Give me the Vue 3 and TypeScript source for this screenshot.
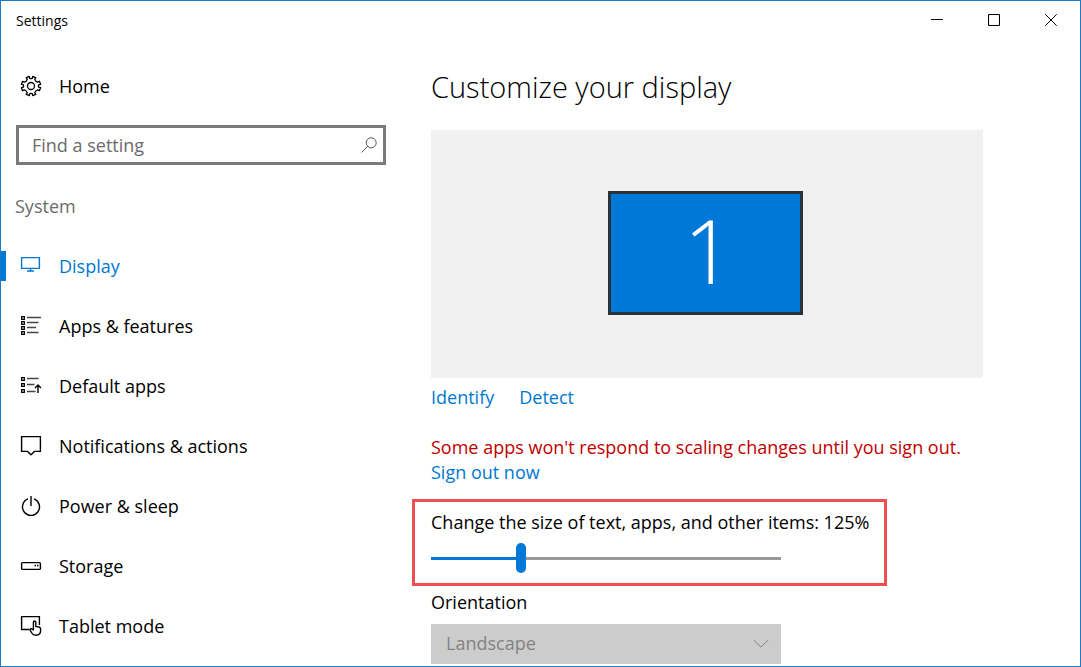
<script setup lang="ts">
import { computed, ref } from 'vue'

interface NavItem {
  id: string
  label: string
}

const items: NavItem[] = [
  { id: 'display', label: 'Display' },
  { id: 'apps', label: 'Apps & features' },
  { id: 'defaults', label: 'Default apps' },
  { id: 'notifications', label: 'Notifications & actions' },
  { id: 'power', label: 'Power & sleep' },
  { id: 'storage', label: 'Storage' },
  { id: 'tablet', label: 'Tablet mode' },
]

const active = ref('display')
const query = ref('')
const scale = ref(125)
const orientation = ref('Landscape')
const filled = computed(() => `${scale.value - 100}%`)
</script>

<template>
  <div class="window">
    <header class="titlebar">
      <span class="title">Settings</span>
      <div class="controls">
        <button type="button" aria-label="Minimize">
          <svg width="12" height="12" viewBox="0 0 12 12"><path d="M0 5.5H12" /></svg>
        </button>
        <button type="button" aria-label="Maximize">
          <svg width="12" height="12" viewBox="0 0 12 12"><path d="M.5 .5H11.5V11.5H.5Z" /></svg>
        </button>
        <button type="button" aria-label="Close">
          <svg width="12" height="12" viewBox="0 0 12 12"><path d="M.3 .3L11.7 11.7M11.7 .3L.3 11.7" /></svg>
        </button>
      </div>
    </header>

    <div class="body">
      <aside class="sidebar">
        <a class="row" href="#home">
          <svg class="icon gear" width="22" height="22" viewBox="0 0 22 22">
            <path d="M9.3 1.4L9.8 3.3Q11 3.9 12.2 3.3L12.7 1.4L15.7 2.6L14.8 4.4Q15.4 6.6 17.6 7.2L19.4 6.3L20.6 9.3L18.7 9.8Q18.1 11 18.7 12.2L20.6 12.7L19.4 15.7L17.6 14.8Q15.4 15.4 14.8 17.6L15.7 19.4L12.7 20.6L12.2 18.7Q11 18.1 9.8 18.7L9.3 20.6L6.3 19.4L7.2 17.6Q6.6 15.4 4.4 14.8L2.6 15.7L1.4 12.7L3.3 12.2Q3.9 11 3.3 9.8L1.4 9.3L2.6 6.3L4.4 7.2Q6.6 6.6 7.2 4.4L6.3 2.6Z" />
            <circle cx="11" cy="11" r="3.5" />
          </svg>
          <span>Home</span>
        </a>

        <form class="search" role="search" @submit.prevent>
          <input v-model="query" type="text" placeholder="Find a setting" aria-label="Find a setting" />
          <button type="submit" aria-label="Search">
            <svg width="16" height="16" viewBox="0 0 16 16">
              <circle cx="10.2" cy="5.8" r="5" />
              <path d="M6.6 9.4L.5 15.5" />
            </svg>
          </button>
        </form>

        <h2 class="group">System</h2>

        <nav>
          <a
            v-for="item in items"
            :key="item.id"
            class="row"
            :class="{ active: active === item.id }"
            :href="`#${item.id}`"
            @click="active = item.id"
          >
            <svg class="icon" width="22" height="22" viewBox="0 0 22 22">
              <g v-if="item.id === 'display'">
                <path d="M1.6 2.6H19.4V13.4H1.6ZM10.5 13.5V16M7 16H14" />
              </g>
              <g v-else-if="item.id === 'apps'">
                <path class="dots" d="M1.7 1.7H4.3V4.3H1.7ZM1.7 6.7H4.3V9.3H1.7ZM1.7 11.7H4.3V14.3H1.7ZM1.7 16.7H4.3V19.3H1.7Z" />
                <path class="lines" d="M7 2.5H21M7 7.5H18.5M7 12.5H16M7 17.5H18.5" />
              </g>
              <g v-else-if="item.id === 'defaults'">
                <path class="dots" d="M1.7 2.7H4.3V5.3H1.7ZM1.7 8.7H4.3V11.3H1.7ZM1.7 14.7H4.3V17.3H1.7Z" />
                <path class="lines" d="M7 3.5H18.5M7 9.5H14.5M7 16.5H15.5" />
                <path d="M18 18V10M15 13L18 10L21 13" />
              </g>
              <g v-else-if="item.id === 'notifications'">
                <path d="M1.6 1.6H20.4V16.4H14.5L11 19.8L7.5 16.4H1.6Z" />
              </g>
              <g v-else-if="item.id === 'power'">
                <path d="M8 3.9A8.5 8.5 0 1 0 14 3.9M11 1V11" />
              </g>
              <g v-else-if="item.id === 'storage'">
                <rect x="1.6" y="7.6" width="18.8" height="6.8" rx="1" />
                <path d="M14.5 10.5H16M17 10.5H18.5" />
              </g>
              <g v-else>
                <path d="M9.5 14.5H1.6V1.6H19.4V10" />
                <path d="M13.4 15.5V7.4Q13.4 6 14.6 6T15.8 7.4V11.4L19 12Q20.6 12.4 20.6 14V15.6Q20.6 20.2 16 20.2Q13 20.2 11.8 18L10.2 15.4Q9.8 13.6 11.4 13.6L13.4 15" />
              </g>
            </svg>
            <span>{{ item.label }}</span>
          </a>
        </nav>
      </aside>

      <main class="content">
        <h1>Customize your display</h1>
        <div class="preview">
          <button type="button" class="monitor">1</button>
        </div>
        <div class="links">
          <a href="#identify">Identify</a>
          <a href="#detect">Detect</a>
        </div>
        <p class="warning">Some apps won't respond to scaling changes until you sign out.</p>
        <a class="signout" href="#signout">Sign out now</a>

        <section class="scaling">
          <label for="scale">Change the size of text, apps, and other items: {{ scale }}%</label>
          <input
            id="scale"
            v-model.number="scale"
            type="range"
            min="100"
            max="200"
            step="25"
            :style="{ '--filled': filled }"
          />
        </section>

        <label class="orientation" for="orientation">Orientation</label>
        <div class="select">
          <select id="orientation" v-model="orientation" disabled>
            <option>Landscape</option>
            <option>Portrait</option>
          </select>
          <svg width="16" height="10" viewBox="0 0 16 10"><path d="M.8 1L8 8.2L15.2 1" /></svg>
        </div>
      </main>
    </div>
  </div>
</template>

<style>
body {
  margin: 0;
}
</style>

<style scoped>
.window {
  box-sizing: border-box;
  height: 100vh;
  display: flex;
  flex-direction: column;
  overflow: hidden;
  border: 1px solid #1e7ac4;
  background: #fff;
  color: #000;
  font-family: "Open Sans", "Noto Sans", sans-serif;
  font-size: 18px;
  line-height: 25px;
}

svg {
  display: block;
  fill: none;
  stroke: currentColor;
}

a {
  color: #0078d0;
  text-decoration: none;
}

button,
input,
select {
  margin: 0;
  padding: 0;
  border: 0;
  background: none;
  border-radius: 0;
  font: inherit;
  color: inherit;
  outline: none;
}

.titlebar {
  flex: none;
  display: flex;
  justify-content: space-between;
  height: 38px;
  padding: 0 1px 0 15px;
}

.title {
  font-size: 14px;
  line-height: 40px;
}

.controls {
  display: flex;
}

.controls button {
  display: grid;
  place-items: center;
  width: 57px;
}

.body {
  flex: 1;
  min-height: 0;
  display: grid;
  grid-template-columns: 386px 1fr;
}

.sidebar {
  padding-top: 17px;
}

.row {
  display: flex;
  align-items: center;
  gap: 17px;
  height: 60px;
  padding-left: 19px;
  color: #000;
}

.icon {
  flex: none;
  stroke-width: 1.4;
}

.gear {
  stroke-width: 1.3;
  stroke-linejoin: round;
}

.dots {
  stroke-width: 1.3;
}

.lines {
  stroke: #444;
}

.row.active {
  color: #0078d0;
  background: linear-gradient(#0078d7, #0078d7) left center / 5px 30px no-repeat;
}

.search {
  box-sizing: border-box;
  display: flex;
  align-items: center;
  height: 40px;
  margin: 9px 1px 0 15px;
  border: 3px solid #7a7a7a;
}

.search input {
  flex: 1;
  min-width: 0;
  padding-left: 13px;
}

.search input::placeholder {
  color: #6b6b6b;
  opacity: 1;
}

.search button {
  padding-right: 6px;
  color: #555;
}

.group {
  margin: 29px 0 17px 14px;
  font-size: 18px;
  font-weight: 400;
  color: #6b6b6b;
}

.content {
  padding: 28px 97px 0 44px;
}

h1 {
  margin: 0;
  font-size: 29px;
  line-height: 40px;
  font-weight: 300;
}

.preview {
  box-sizing: border-box;
  display: grid;
  place-items: center;
  height: 248px;
  max-width: 552px;
  margin-top: 23px;
  padding: 0 3px 2px 0;
  background: #f1f1f1;
}

.monitor {
  box-sizing: border-box;
  width: 195px;
  height: 124px;
  padding: 0 0 6px 6px;
  border: 3px solid #2b3238;
  background: #0078d7;
  color: #fff;
  font-size: 88px;
  line-height: 112px;
  font-weight: 300;
}

.links {
  display: flex;
  gap: 25px;
  margin-top: 7px;
}

.warning {
  margin: 25px 0 0;
  color: #c00000;
}

.signout {
  display: block;
  width: fit-content;
}

.scaling {
  box-sizing: border-box;
  max-width: 475px;
  margin: 14px 0 0 -19px;
  padding: 8px 16px 10px;
  border: 3px solid #ee4f4f;
}

.scaling label {
  display: block;
  white-space: nowrap;
}

#scale {
  appearance: none;
  display: block;
  width: 350px;
  height: 30px;
  margin-top: 8px;
  background:
    linear-gradient(#0078d7, #0078d7) left center / var(--filled) 3px no-repeat,
    linear-gradient(#999, #999) left center / 100% 3px no-repeat;
}

#scale::-webkit-slider-thumb {
  appearance: none;
  width: 10px;
  height: 30px;
  border-radius: 5px;
  background: #0078d7;
}

.orientation {
  display: block;
  margin-top: 4px;
}

.select {
  display: grid;
  grid-template-columns: 1fr 28px;
  align-items: center;
  width: 350px;
  height: 40px;
  margin-top: 9px;
  background: #ccc;
  color: #838383;
}

.select select {
  grid-area: 1 / 1 / 2 / 3;
  appearance: none;
  height: 40px;
  padding: 0 0 2px 15px;
  opacity: 1;
}

.select svg {
  grid-area: 1 / 2;
  pointer-events: none;
}
</style>
